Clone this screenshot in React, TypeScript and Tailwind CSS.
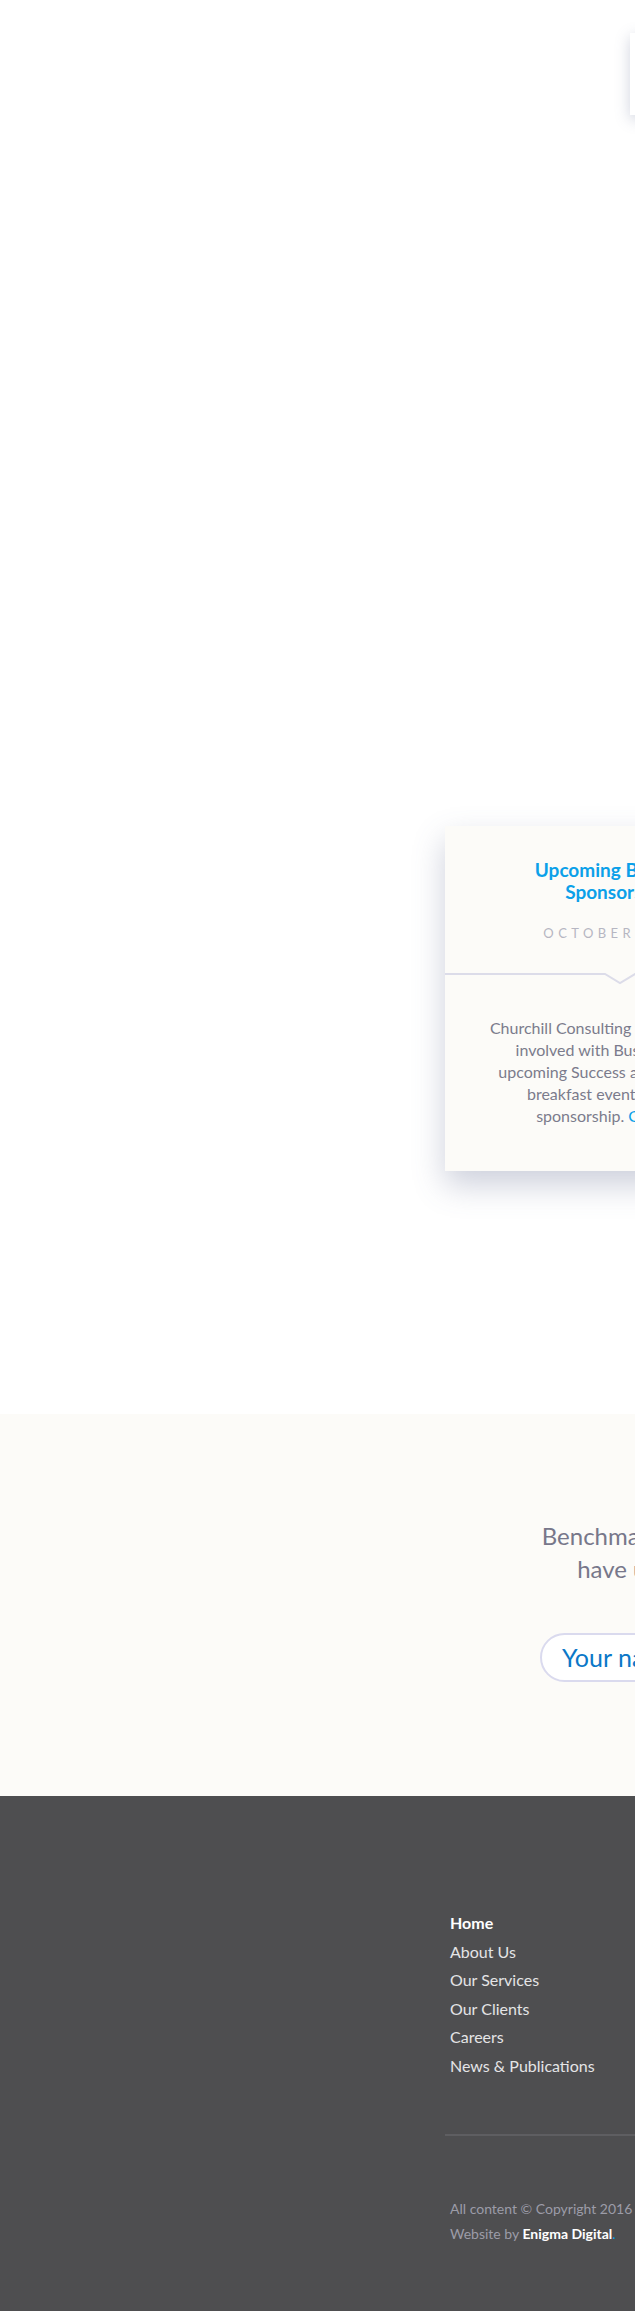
import React from "react";

export default function App() {
  return (
    <div
      className="w-[635px] overflow-hidden bg-white"
      style={{ fontFamily: "Lato, 'Noto Sans', sans-serif" }}
    >
      {/* top area */}
      <div className="h-[1414px] pt-[33px]">
        <div className="ml-[445px] w-[344px]">
          <div className="flex justify-end">
            <div className="h-[82px] w-[159px] bg-white shadow-[0_4px_14px_rgba(90,100,140,0.28)]" />
          </div>
          {/* card */}
          <div className="mt-[711px] bg-[#fcfbf8] shadow-[0_14px_30px_rgba(90,100,140,0.3)]">
            <div className="px-6 pt-[33px] text-center">
              <h3 className="text-[19px] font-bold leading-[22px] text-[#0ba0e9]">
                Upcoming Business
                <br />
                Sponsorship
              </h3>
              <p className="mt-[20px] text-[13px] leading-[20px] tracking-[0.34em] text-[#b6b6c2]">
                OCTOBER 2016
              </p>
            </div>
            <svg className="mt-[30px] block" width="344" height="12" viewBox="0 0 344 12">
              <polyline
                points="0,1 160,1 175,10 190,1 344,1"
                fill="none"
                stroke="#dcdce9"
                strokeWidth="2"
              />
            </svg>
            <div className="px-3 pb-[44px] pt-[32px] text-center text-[16px] leading-[22px] text-[#7b7b8c]">
              Churchill Consulting is pleased to be
              <br />
              involved with Business News
              <br />
              upcoming Success and Leadership
              <br />
              breakfast event through a
              <br />
              sponsorship. <span className="text-[#0ba0e9]">Click here</span>
            </div>
          </div>
        </div>
      </div>

      {/* benchmark section */}
      <div className="h-[382px] bg-[#fcfbf8] pt-[105px]">
        <div className="ml-[445px] w-[344px] text-center">
          <p className="text-[24px] leading-[33px] text-[#77778a]">
            Benchmarking
            <br />
            have us
          </p>
          <div className="mt-[48px] flex justify-center">
            <div className="flex h-[49px] w-[154px] items-center rounded-full border-2 border-[#dadaee] bg-white pl-[20px] text-left text-[25px] text-[#0b78c8]">
              Your name
            </div>
          </div>
        </div>
      </div>

      {/* footer */}
      <footer className="h-[515px] bg-[#4e4e50] pt-[113px]">
        <div className="ml-[445px] w-[344px]">
          <ul className="pl-[5px] text-[16px] leading-[28.6px] text-[#e4e4e6]">
            <li className="font-bold text-white">Home</li>
            <li>About Us</li>
            <li>Our Services</li>
            <li>Our Clients</li>
            <li>Careers</li>
            <li>News &amp; Publications</li>
          </ul>
          <div className="mt-[53px] h-[2px] bg-[#5e5e61]" />
          <div className="mt-[60px] pl-[5px] text-[14px] leading-[25px] text-[#9c9ca8]">
            <p className="whitespace-nowrap">All content © Copyright 2016 Churchill Consulting</p>
            <p>
              Website by <span className="font-bold text-white">Enigma Digital</span>
              <span className="text-[#0ba0e9]">.</span>
            </p>
          </div>
        </div>
      </footer>
    </div>
  );
}
